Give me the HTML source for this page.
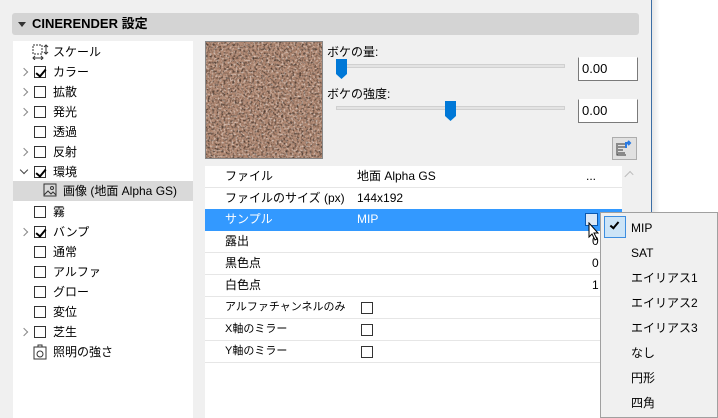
<!DOCTYPE html>
<html><head><meta charset="utf-8"><style>
*{margin:0;padding:0;box-sizing:border-box}
body{width:718px;height:418px;overflow:hidden;background:#f0f0f0;position:relative;font-family:"Liberation Sans","Noto Sans CJK JP",sans-serif;font-size:12px;color:#000}
.abs{position:absolute}
.hdr{left:12px;top:13px;width:627px;height:22px;background:#d4d4d4;border-radius:3px;font-weight:bold;font-size:13px;line-height:22px;padding-left:20px}
.hdr:before{content:"";position:absolute;left:6px;top:9px;border-left:4px solid transparent;border-right:4px solid transparent;border-top:5px solid #333}
.tree{left:13px;top:41px;width:180px;height:377px;background:#fff}
.tr{position:absolute;left:0;width:180px;height:20px;line-height:20px}
.tr span{position:absolute;left:40px;top:0}
.cb{position:absolute;left:21px;top:4px;width:12px;height:12px;border:1px solid #333;background:#fff}
.ck:after{content:"";position:absolute;left:3px;top:0px;width:4px;height:8px;border:solid #000;border-width:0 2px 2px 0;transform:rotate(40deg)}
.arr{position:absolute;left:8px;top:7px;width:6px;height:6px;border:solid #888;border-width:1.5px 1.5px 0 0;transform:rotate(45deg)}
.arrd{transform:rotate(135deg);top:5px;border-color:#444}
.tex{left:205px;top:41px;width:118px;height:118px;border:1px solid #888;background:#a9806a;overflow:hidden}
.track{height:4px;background:#e3e3e3;border:1px solid #d0d0d0}
.thumb{width:11px;height:20px;background:#0078d7;clip-path:polygon(0 0,100% 0,100% 75%,50% 100%,0 75%)}
.inp{width:60px;height:24px;background:#fff;border:1px solid #7a7a7a;border-top-color:#fff;font-size:13px;line-height:22px;padding-left:3px}
.tbl{left:205px;top:166px;width:417px;height:252px;background:#fff}
.row{position:absolute;left:0;width:417px;height:22px;line-height:21px;border-bottom:1px solid #e6e6e6}
.row .k{position:absolute;left:20px}
.row .v{position:absolute;left:152px}
.row .cbx{position:absolute;left:156px;top:5px;width:12px;height:12px;border:1px solid #333}
.menu{left:600px;top:212px;width:118px;height:206px;background:#f0f0f0;border:1px solid #a0a0a0}
.mi{position:absolute;left:30px;height:25px;line-height:25px;font-size:12px}
</style></head><body>
<div class="abs hdr">CINERENDER 設定</div>
<div class="abs" style="left:651px;top:0;width:1px;height:418px;background:#3c6ea5"></div>
<div class="abs" style="left:652px;top:0;width:66px;height:418px;background:linear-gradient(90deg,#e6e6e6,#fff 8px)"></div>

<div class="abs tree">
 <div class="tr" style="top:1px"><svg class="abs" style="left:19px;top:2px" width="18" height="16"><rect x="1" y="1" width="9" height="9" fill="none" stroke="#333" stroke-dasharray="2,1"/><path d="M14 1v9M12 3l2-2 2 2M12 8l2 2 2-2M1 14h10M3 12l-2 2 2 2M9 12l2 2-2 2" stroke="#333" fill="none"/></svg><span>スケール</span></div>
 <div class="tr" style="top:21px"><i class="arr"></i><i class="cb ck"></i><span>カラー</span></div>
 <div class="tr" style="top:41px"><i class="arr"></i><i class="cb"></i><span>拡散</span></div>
 <div class="tr" style="top:61px"><i class="arr"></i><i class="cb"></i><span>発光</span></div>
 <div class="tr" style="top:81px"><i class="cb"></i><span>透過</span></div>
 <div class="tr" style="top:101px"><i class="arr"></i><i class="cb"></i><span>反射</span></div>
 <div class="tr" style="top:121px"><i class="arr arrd"></i><i class="cb ck"></i><span>環境</span></div>
 <div class="tr" style="top:140px;background:#d9d9d9"><svg class="abs" style="left:30px;top:2px" width="15" height="15"><rect x="1" y="1" width="12" height="12" fill="none" stroke="#333"/><path d="M1 12l4-4 3 3 2-2 3 3" stroke="#333" fill="none"/><circle cx="9" cy="5" r="1.5" fill="none" stroke="#333"/></svg><span style="left:50px">画像 (地面 Alpha GS)</span></div>
 <div class="tr" style="top:161px"><i class="cb"></i><span>霧</span></div>
 <div class="tr" style="top:181px"><i class="arr"></i><i class="cb ck"></i><span>バンプ</span></div>
 <div class="tr" style="top:201px"><i class="cb"></i><span>通常</span></div>
 <div class="tr" style="top:221px"><i class="cb"></i><span>アルファ</span></div>
 <div class="tr" style="top:241px"><i class="cb"></i><span>グロー</span></div>
 <div class="tr" style="top:261px"><i class="cb"></i><span>変位</span></div>
 <div class="tr" style="top:281px"><i class="arr"></i><i class="cb"></i><span>芝生</span></div>
 <div class="tr" style="top:301px"><svg class="abs" style="left:20px;top:2px" width="14" height="16"><rect x="1" y="3" width="12" height="12" fill="none" stroke="#333"/><circle cx="7" cy="10" r="3" fill="none" stroke="#333"/><path d="M5 3V1h4v2" stroke="#333" fill="none"/></svg><span>照明の強さ</span></div>
</div>

<div class="abs tex"><svg width="118" height="118"><defs><filter id="n" x="0" y="0" width="100%" height="100%"><feTurbulence type="fractalNoise" baseFrequency="0.45" numOctaves="3" seed="3" result="t"/><feColorMatrix in="t" type="matrix" values="0 0 0 0 0  0 0 0 0 0  0 0 0 0 0  3 0 0 0 -1.35"/></filter><filter id="m" x="0" y="0" width="100%" height="100%"><feTurbulence type="fractalNoise" baseFrequency="0.5" numOctaves="2" seed="9" result="t"/><feColorMatrix in="t" type="matrix" values="0 0 0 0 1  0 0 0 0 0.93  0 0 0 0 0.88  0 3 0 0 -1.45"/></filter></defs><rect width="118" height="118" fill="#ae8670"/><rect width="118" height="118" filter="url(#n)" fill="#000" opacity="0.55"/><rect width="118" height="118" filter="url(#m)" opacity="0.6"/></svg></div>

<div class="abs" style="left:327px;top:43px">ボケの量:</div>
<div class="abs track" style="left:336px;top:64px;width:229px"></div>
<div class="abs thumb" style="left:336px;top:59px"></div>
<div class="abs inp" style="left:578px;top:57px">0.00</div>
<div class="abs" style="left:327px;top:85px">ボケの強度:</div>
<div class="abs track" style="left:336px;top:106px;width:229px"></div>
<div class="abs thumb" style="left:445px;top:101px"></div>
<div class="abs inp" style="left:578px;top:99px">0.00</div>
<div class="abs" style="left:612px;top:137px;width:25px;height:23px;border:1px solid #adadad;background:#e1e1e1"><svg width="23" height="21"><path d="M5 6h7M5 9h7M5 12h5M5 15h7M4 5v12h9" stroke="#333" fill="none"/><path d="M13 10V5h3M15 3l2 2-2 2" stroke="#2a7ae2" stroke-width="2" fill="none"/></svg></div>

<div class="abs tbl">
 <div class="row" style="top:0"><span class="k">ファイル</span><span class="v">地面 Alpha GS</span><span style="position:absolute;left:381px">...</span></div>
 <div class="row" style="top:22px"><span class="k">ファイルのサイズ (px)</span><span class="v">144x192</span></div>
 <div class="row" style="top:43px;background:#3399ff;color:#fff;border:0"><span class="k">サンプル</span><span class="v">MIP</span><span style="position:absolute;left:380px;top:4px;width:13px;height:13px;border:1px solid #0a58b0;background:#dbe8f7"></span></div>
 <div class="row" style="top:65px"><span class="k">露出</span><span style="position:absolute;left:387px">0</span></div>
 <div class="row" style="top:87px"><span class="k">黒色点</span><span style="position:absolute;left:387px">0</span></div>
 <div class="row" style="top:109px"><span class="k">白色点</span><span style="position:absolute;left:387px">1</span></div>
 <div class="row" style="top:131px;font-size:11px"><span class="k">アルファチャンネルのみ</span><i class="cbx"></i></div>
 <div class="row" style="top:153px;font-size:11px"><span class="k">X軸のミラー</span><i class="cbx"></i></div>
 <div class="row" style="top:175px;font-size:11px"><span class="k">Y軸のミラー</span><i class="cbx"></i></div>
</div>
<div class="abs" style="left:625px;top:173px;width:8px;height:5px;border:solid #bbb;border-width:1.5px 1.5px 0 0;transform:rotate(-45deg)"></div>
<svg class="abs" style="left:588px;top:222px" width="14" height="20"><path d="M1 1v14l3-3 3 6 2-1-3-6h4z" fill="#fff" stroke="#000"/></svg>

<div class="abs menu">
 <div class="abs" style="left:3px;top:3px;width:22px;height:22px;background:#cce4f7;border:1px solid #3d8ee0"></div>
 <div class="abs" style="left:11px;top:7px;width:5px;height:9px;border:solid #000;border-width:0 2px 2px 0;transform:rotate(40deg)"></div>
 <div class="mi" style="top:3px">MIP</div>
 <div class="mi" style="top:28px">SAT</div>
 <div class="mi" style="top:53px">エイリアス1</div>
 <div class="mi" style="top:78px">エイリアス2</div>
 <div class="mi" style="top:103px">エイリアス3</div>
 <div class="mi" style="top:128px">なし</div>
 <div class="mi" style="top:153px">円形</div>
 <div class="mi" style="top:178px">四角</div>
</div>
</body></html>
